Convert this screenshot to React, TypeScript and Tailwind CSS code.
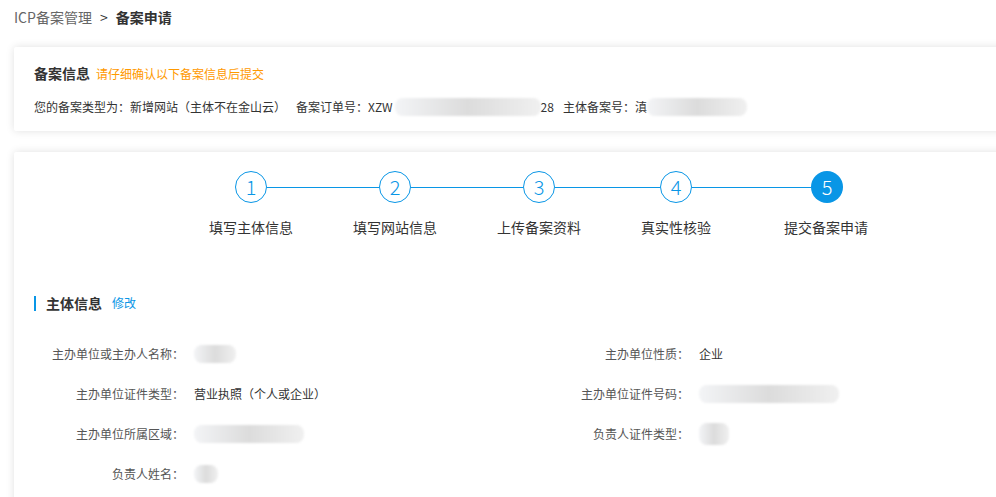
import React from "react";

const steps = [
  { n: 1, label: "填写主体信息" },
  { n: 2, label: "填写网站信息" },
  { n: 3, label: "上传备案资料" },
  { n: 4, label: "真实性核验" },
  { n: 5, label: "提交备案申请" },
];

// connector widths between circle edges
const lines = ["w-[112px]", "w-[112px]", "w-[105px]", "w-[119px]"];
// label widths and the space before each one
const labelCls = [
  "w-[84px]",
  "w-[84px] ml-[60px]",
  "w-[84px] ml-[60px]",
  "w-[70px] ml-[60px]",
  "w-[84px] ml-[73px]",
];

// a blurred mask standing in for hidden values
function Mask({ w, className = "" }: { w: string; className?: string }) {
  return (
    <span
      className={`inline-block h-[18px] align-middle rounded-[8px] bg-gradient-to-r from-gray-100 via-[#dcdcdc] to-[#f0f0f0] blur-[1px] ${w} ${className}`}
    />
  );
}

function Row({ label, children }: { label: string; children?: React.ReactNode }) {
  return (
    <div className="flex items-center h-[40px]">
      <span className="w-[150px] text-right text-[#555]">{label}</span>
      <span className="ml-[10px] text-[#333] flex items-center">{children}</span>
    </div>
  );
}

export default function App() {
  return (
    <div
      className="w-full h-[497px] overflow-hidden bg-white"
      style={{ fontFamily: '"Microsoft YaHei", "Noto Sans CJK SC", "Noto Sans", sans-serif' }}
    >
      {/* breadcrumb */}
      <div className="flex items-center h-[34px] pl-[14px] text-[14px]">
        <span className="text-[#666]">ICP备案管理</span>
        <span className="mx-[8px] text-[#333]">&gt;</span>
        <span className="text-[#333] font-bold">备案申请</span>
      </div>

      {/* info card */}
      <section className="ml-[14px] mr-[-20px] mt-[13px] h-[84px] bg-white rounded-[2px] shadow-[0_0_8px_rgba(0,0,0,0.12)] pl-[20px] pt-[16px]">
        <div className="flex items-baseline h-[20px]">
          <span className="text-[14px] font-bold text-[#333]">备案信息</span>
          <span className="ml-[6px] text-[12px] text-[#ff9900]">请仔细确认以下备案信息后提交</span>
        </div>
        <div className="flex items-center h-[20px] mt-[14px] text-[12px] text-[#333]">
          <span>您的备案类型为：新增网站（主体不在金山云）</span>
          <span className="ml-[10px]">备案订单号：XZW</span>
          <Mask w="w-[146px]" className="ml-[2px]" />
          <span>28</span>
          <span className="ml-[9px]">主体备案号：滇</span>
          <Mask w="w-[100px]" />
        </div>
      </section>

      {/* main card */}
      <section className="ml-[14px] mr-[-20px] mt-[21px] h-[400px] bg-white rounded-[2px] shadow-[0_0_8px_rgba(0,0,0,0.12)]">
        {/* steps */}
        <div className="pt-[19px]">
          <div className="flex items-center pl-[221px]">
            {steps.map((s, i) => (
              <React.Fragment key={s.n}>
                {s.n === 5 ? (
                  <div className="w-[32px] h-[32px] rounded-full bg-[#0996e6] text-white flex items-center justify-center text-[20px] font-light">
                    {s.n}
                  </div>
                ) : (
                  <div className="w-[32px] h-[32px] rounded-full border border-[#0996e6] text-[#0996e6] flex items-center justify-center text-[20px] font-light">
                    {s.n}
                  </div>
                )}
                {i < lines.length && <div className={`h-px bg-[#0996e6] ${lines[i]}`} />}
              </React.Fragment>
            ))}
          </div>
          <div className="flex items-center pl-[195px] mt-[14px] h-[20px] text-[14px] text-[#333]">
            {steps.map((s, i) => (
              <span key={s.n} className={`text-center whitespace-nowrap ${labelCls[i]}`}>
                {s.label}
              </span>
            ))}
          </div>
        </div>

        {/* section title */}
        <div className="flex items-center h-[20px] mt-[56px] pl-[20px]">
          <span className="w-[2px] h-[15px] bg-[#0996e6]" />
          <span className="ml-[10px] text-[14px] font-bold text-[#333]">主体信息</span>
          <span className="ml-[10px] text-[12px] text-[#0996e6]">修改</span>
        </div>

        {/* form */}
        <div className="grid grid-cols-[505px_505px] mt-[21px] pl-[20px] text-[12px]">
          <Row label="主办单位或主办人名称：">
            <Mask w="w-[42px]" />
          </Row>
          <Row label="主办单位性质：">企业</Row>
          <Row label="主办单位证件类型：">营业执照（个人或企业）</Row>
          <Row label="主办单位证件号码：">
            <Mask w="w-[140px]" />
          </Row>
          <Row label="主办单位所属区域：">
            <Mask w="w-[110px]" />
          </Row>
          <Row label="负责人证件类型：">
            <Mask w="w-[30px]" className="h-[22px] rounded-[6px]" />
          </Row>
          <Row label="负责人姓名：">
            <Mask w="w-[24px]" />
          </Row>
        </div>
      </section>
    </div>
  );
}
